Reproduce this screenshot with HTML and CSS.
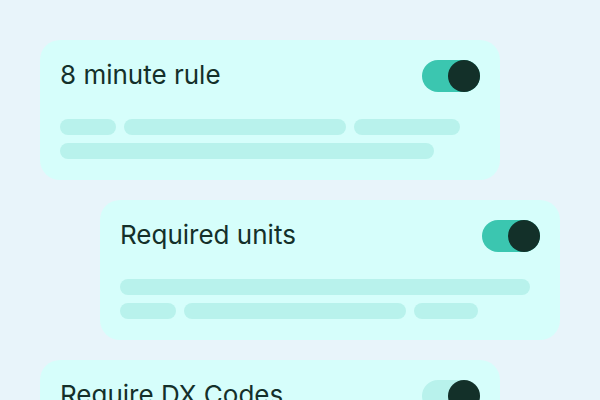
FILE: index.html
```html
<!DOCTYPE html>
<html>
<head>
<meta charset="utf-8">
<link rel="stylesheet" href="styles.css">
</head>
<body>
<div class="stack">
  <div class="card">
    <div class="head">
      <span class="title">8 minute rule</span>
      <span class="toggle on"><span class="knob"></span></span>
    </div>
    <div class="lines">
      <div class="row"><span class="bar" style="width:56px"></span><span class="bar" style="width:222px"></span><span class="bar" style="width:106px"></span></div>
      <div class="row"><span class="bar" style="width:374px"></span></div>
    </div>
  </div>
  <div class="card shift">
    <div class="head">
      <span class="title">Required units</span>
      <span class="toggle on"><span class="knob"></span></span>
    </div>
    <div class="lines">
      <div class="row"><span class="bar" style="width:410px"></span></div>
      <div class="row"><span class="bar" style="width:56px"></span><span class="bar" style="width:222px"></span><span class="bar" style="width:64px"></span></div>
    </div>
  </div>
  <div class="card">
    <div class="head">
      <span class="title">Require DX Codes</span>
      <span class="toggle off"><span class="knob"></span></span>
    </div>
    <div class="lines">
      <div class="row"><span class="bar" style="width:410px"></span></div>
    </div>
  </div>
</div>
</body>
</html>
```
FILE: styles.css
```css
html, body { margin: 0; padding: 0; }
body {
  width: 600px;
  height: 400px;
  overflow: hidden;
  background: #e8f4fa;
  font-family: Inter, "Noto Sans", sans-serif;
}
.stack {
  display: flex;
  flex-direction: column;
  gap: 20px;
  padding: 40px 0 0 40px;
}
.card {
  width: 460px;
  box-sizing: border-box;
  background: #d6fefb;
  border-radius: 20px;
  padding: 20px 20px 21px 20px;
}
.card.shift { margin-left: 60px; }
.head {
  display: flex;
  justify-content: space-between;
  align-items: center;
  height: 32px;
}
.title {
  font-size: 26px;
  line-height: 32px;
  color: #14302a;
  position: relative;
  top: -1px;
}
.toggle {
  width: 58px;
  height: 32px;
  border-radius: 16px;
  display: flex;
  justify-content: flex-end;
}
.toggle.on { background: #3bc6b0; }
.toggle.off { background: #b8f2ec; }
.knob {
  width: 32px;
  height: 32px;
  border-radius: 50%;
  background: #133029;
}
.lines {
  margin-top: 27px;
  display: flex;
  flex-direction: column;
  gap: 8px;
}
.row { display: flex; gap: 8px; }
.bar {
  height: 16px;
  border-radius: 8px;
  background: #b8f2ec;
}
```
